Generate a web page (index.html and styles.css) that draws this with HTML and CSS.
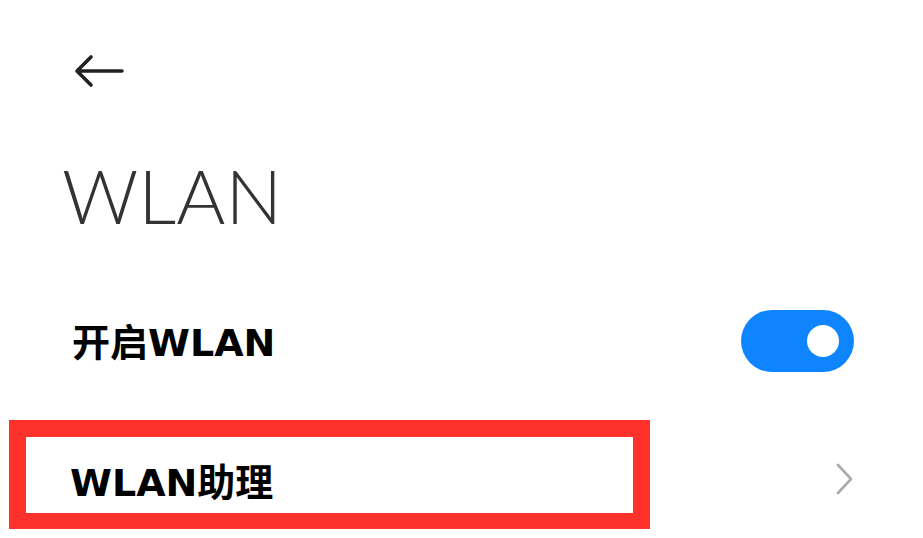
FILE: index.html
```html
<!DOCTYPE html>
<html>
<head>
<meta charset="utf-8">
<link rel="stylesheet" href="styles.css">
</head>
<body>
<div class="page">
  <div class="header">
    <svg class="back" width="50" height="34" viewBox="0 0 50 34">
      <path d="M48 17H3M17 3L3 17L17 31" fill="none" stroke="#222" stroke-width="3.6" stroke-linecap="round" stroke-linejoin="round"/>
    </svg>
  </div>
  <h1 class="title">WLAN</h1>
  <div class="row row-toggle">
    <span class="label">开启WLAN</span>
    <div class="toggle"><div class="knob"></div></div>
  </div>
  <div class="row row-link">
    <div class="highlight"><span class="label">WLAN助理</span></div>
    <svg class="chevron" width="20" height="34" viewBox="0 0 20 34">
      <path d="M3 3L16 17L3 31" fill="none" stroke="#ababab" stroke-width="2.6" stroke-linecap="round" stroke-linejoin="round"/>
    </svg>
  </div>
</div>
</body>
</html>
```
FILE: styles.css
```css
html, body {
  margin: 0;
  padding: 0;
  background: #fff;
}
.page {
  width: 923px;
  height: 538px;
  overflow: hidden;
  display: flex;
  flex-direction: column;
}
.header {
  height: 120px;
  padding-left: 74px;
  padding-top: 54px;
  box-sizing: border-box;
}
.back {
  display: block;
}
.title {
  margin: 0;
  padding-left: 62px;
  font-family: Lato, sans-serif;
  font-weight: 300;
  font-size: 75px;
  line-height: 150px;
  height: 150px;
  color: #333;
}
.label {
  font-family: "DejaVu Sans", "Noto Sans CJK SC", sans-serif;
  font-weight: 700;
  font-size: 38px;
  color: #000;
}
.row {
  display: flex;
  align-items: center;
}
.row-toggle {
  height: 142px;
  padding-left: 72px;
  padding-right: 69px;
  justify-content: space-between;
}
.row-toggle .label {
  margin-top: -4px;
}
.toggle {
  width: 113px;
  height: 62px;
  border-radius: 31px;
  background: #0e85ff;
  display: flex;
  align-items: center;
  justify-content: flex-end;
  padding-right: 15px;
  box-sizing: border-box;
}
.knob {
  width: 32px;
  height: 32px;
  border-radius: 50%;
  background: #fff;
}
.row-link {
  margin-top: 8px;
  padding-left: 9px;
  padding-right: 68px;
  justify-content: space-between;
}
.highlight {
  width: 641px;
  height: 109px;
  box-sizing: border-box;
  border: 17px solid #ff312b;
  border-bottom-width: 16px;
  padding-left: 44px;
  padding-top: 8px;
  display: flex;
  align-items: center;
}
.chevron {
  display: block;
  margin-top: 8px;
}
```
